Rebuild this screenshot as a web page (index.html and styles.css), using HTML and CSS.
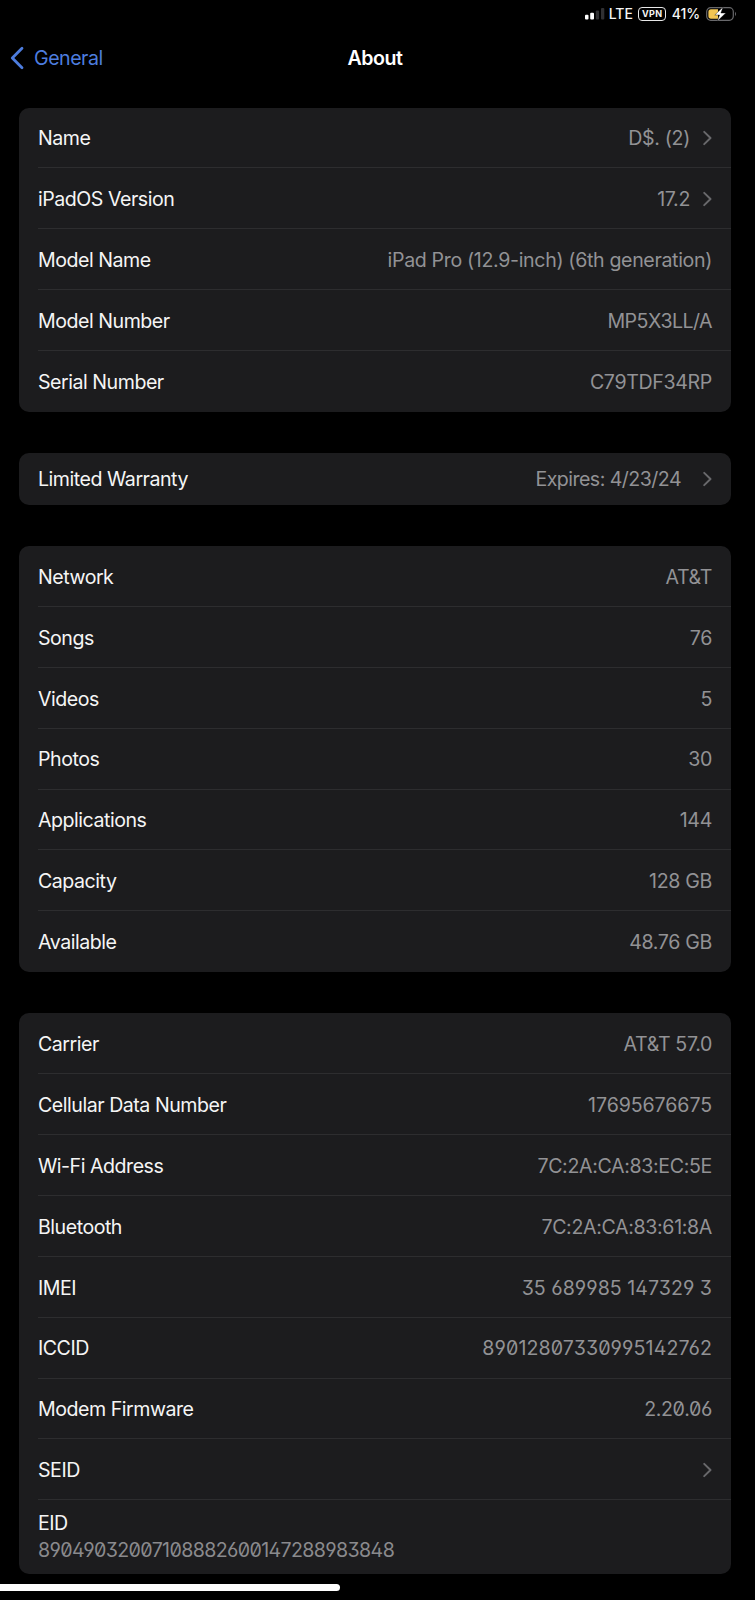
FILE: index.html
```
<!DOCTYPE html>
<html lang="en">
<head>
<meta charset="utf-8">
<title>About</title>
<link rel="stylesheet" href="styles.css">
</head>
<body>
<svg class="defs" aria-hidden="true"><symbol id="chev" viewBox="0 0 10 16"><path d="M2.2 1.9 8.5 8 2.2 14.1" fill="none" stroke="currentColor" stroke-width="2" stroke-linecap="round" stroke-linejoin="round"/></symbol></svg>
<div class="screen">
  <div class="status">
    <svg class="signal" viewBox="0 0 20 12"><rect x="0" y="6.7" width="3.5" height="4.8" rx="1" fill="#fff"/><rect x="5.2" y="4.8" width="3.8" height="6.7" rx="1" fill="#fff"/><rect x="10.8" y="2.4" width="3.3" height="9.1" rx="1" fill="#303032"/><rect x="16" y="0" width="3.3" height="11.5" rx="1" fill="#303032"/></svg>
    <span class="lte">LTE</span>
    <span class="vpn">VPN</span>
    <span class="pct">41%</span>
    <svg class="battery" viewBox="0 0 32 16"><rect x=".7" y="1.7" width="26.6" height="12.6" rx="4" fill="none" stroke="#68686b" stroke-width="1.2"/><path d="M5 3.3h7v9.4H5a2.6 2.6 0 0 1-2.6-2.6V5.9A2.6 2.6 0 0 1 5 3.3z" fill="#f3c653"/><path d="M29 5.8q2 2.2 0 4.4z" fill="#68686b"/><path d="M17.2.8 8.8 9h4.8l-2.4 6.3L19.8 7h-4.9z" fill="#fff" stroke="#000" stroke-width=".4"/></svg>
  </div>
  <header class="nav">
    <a class="back"><svg viewBox="0 0 14 24"><path d="M12 2.3 2.3 12 12 21.7" fill="none" stroke="currentColor" stroke-width="2.8" stroke-linecap="round" stroke-linejoin="round"/></svg><span>General</span></a>
    <h1>About</h1>
  </header>
  <main class="groups">
    <section class="card">
      <div class="row"><span>Name</span><span class="value">D$. (2)</span><svg class="chev"><use href="#chev"/></svg></div>
      <div class="row"><span>iPadOS Version</span><span class="value">17.2</span><svg class="chev"><use href="#chev"/></svg></div>
      <div class="row"><span>Model Name</span><span class="value">iPad Pro (12.9-inch) (6th generation)</span></div>
      <div class="row"><span>Model Number</span><span class="value tight">MP5X3LL/A</span></div>
      <div class="row"><span>Serial Number</span><span class="value">C79TDF34RP</span></div>
    </section>
    <section class="card warranty">
      <div class="row"><span>Limited Warranty</span><span class="value tight">Expires: 4/23/24</span><svg class="chev"><use href="#chev"/></svg></div>
    </section>
    <section class="card">
      <div class="row"><span>Network</span><span class="value">AT&amp;T</span></div>
      <div class="row"><span>Songs</span><span class="value">76</span></div>
      <div class="row"><span>Videos</span><span class="value">5</span></div>
      <div class="row"><span>Photos</span><span class="value">30</span></div>
      <div class="row"><span>Applications</span><span class="value">144</span></div>
      <div class="row"><span>Capacity</span><span class="value">128 GB</span></div>
      <div class="row"><span>Available</span><span class="value">48.76 GB</span></div>
    </section>
    <section class="card">
      <div class="row"><span>Carrier</span><span class="value">AT&amp;T 57.0</span></div>
      <div class="row"><span>Cellular Data Number</span><span class="value number">17695676675</span></div>
      <div class="row"><span>Wi-Fi Address</span><span class="value">7C:2A:CA:83:EC:5E</span></div>
      <div class="row"><span>Bluetooth</span><span class="value">7C:2A:CA:83:61:8A</span></div>
      <div class="row"><span>IMEI</span><span class="value code imei">35 689985 147329 3</span></div>
      <div class="row"><span>ICCID</span><span class="value code long">89012807330995142762</span></div>
      <div class="row"><span>Modem Firmware</span><span class="value code">2.20.06</span></div>
      <div class="row"><span>SEID</span><svg class="chev solo"><use href="#chev"/></svg></div>
      <div class="row eid"><span>EID</span><span class="code eid-value">89049032007108882600147288983848</span></div>
    </section>
  </main>
  <div class="home-bar"></div>
</div>
</body>
</html>
```
FILE: styles.css
```
* { box-sizing: border-box; }
body { margin: 0; background: #000; }
.defs { position: absolute; width: 0; height: 0; }
.screen {
  width: 755px; height: 1600px; overflow: hidden;
  background: #000; color: #f5f5f5;
  font-family: Inter, "Liberation Sans", sans-serif;
  font-size: 19.6px; line-height: 24px; letter-spacing: -0.48px;
}
.status {
  height: 28px; padding-right: 17px;
  display: flex; align-items: center; justify-content: flex-end;
  font-size: 14px; font-weight: 500; line-height: 16px; letter-spacing: -0.1px;
}
.signal { width: 20px; height: 12px; margin-right: 4px; }
.lte { margin-right: 5.5px; }
.vpn {
  width: 28px; height: 14px; margin-right: 5.5px;
  border: 1.4px solid #e8e8e8; border-radius: 4px;
  font-size: 9px; font-weight: 700; line-height: 11px; text-align: center; letter-spacing: .3px;
}
.pct { margin-right: 6px; }
.battery { width: 32px; height: 16px; }
.nav {
  height: 60px; padding: 0 10px;
  display: grid; grid-template-columns: 1fr auto 1fr; align-items: center;
}
.nav h1 { margin: 0 5px 0 0; font-size: 19.6px; font-weight: 600; color: #fff; grid-column: 2; }
.back { display: flex; align-items: center; gap: 10px; color: #4d7ddf; }
.back svg { width: 14px; height: 24px; }
.groups { display: flex; flex-direction: column; gap: 41.4px; padding: 19.5px 24px 0 19px; }
.card { background: #1c1c1e; border-radius: 10px; overflow: hidden; padding-left: 19px; }
.row {
  height: 60.85px; padding: 1.6px 19px 0 0;
  display: flex; align-items: center;
  border-bottom: 1px solid #2d2d2f;
}
.row:last-child { border-bottom: 0; padding-top: .6px; }
.warranty .row { height: 51.7px; }
.value { margin-left: auto; color: #929295; letter-spacing: -0.35px; }
.tight { letter-spacing: -0.55px; }
.number { letter-spacing: -0.1px; }
.chev { width: 10px; height: 16px; margin-left: 12px; color: #68686b; }
.warranty .chev { margin-left: 21px; }
.solo { margin-left: auto; }
.code { font-feature-settings: "zero", "ss01"; }
.imei { letter-spacing: 0.02px; }
.long { letter-spacing: 0.1px; }
.row.eid { height: 73.5px; padding-top: 0; flex-direction: column; align-items: flex-start; justify-content: center; }
.eid span { line-height: 27px; }
.eid-value { color: #8a8a8d; letter-spacing: -0.63px; }
.home-bar { width: 340px; height: 7px; margin-top: 10.3px; background: #fff; border-radius: 0 4px 4px 0; }
```
